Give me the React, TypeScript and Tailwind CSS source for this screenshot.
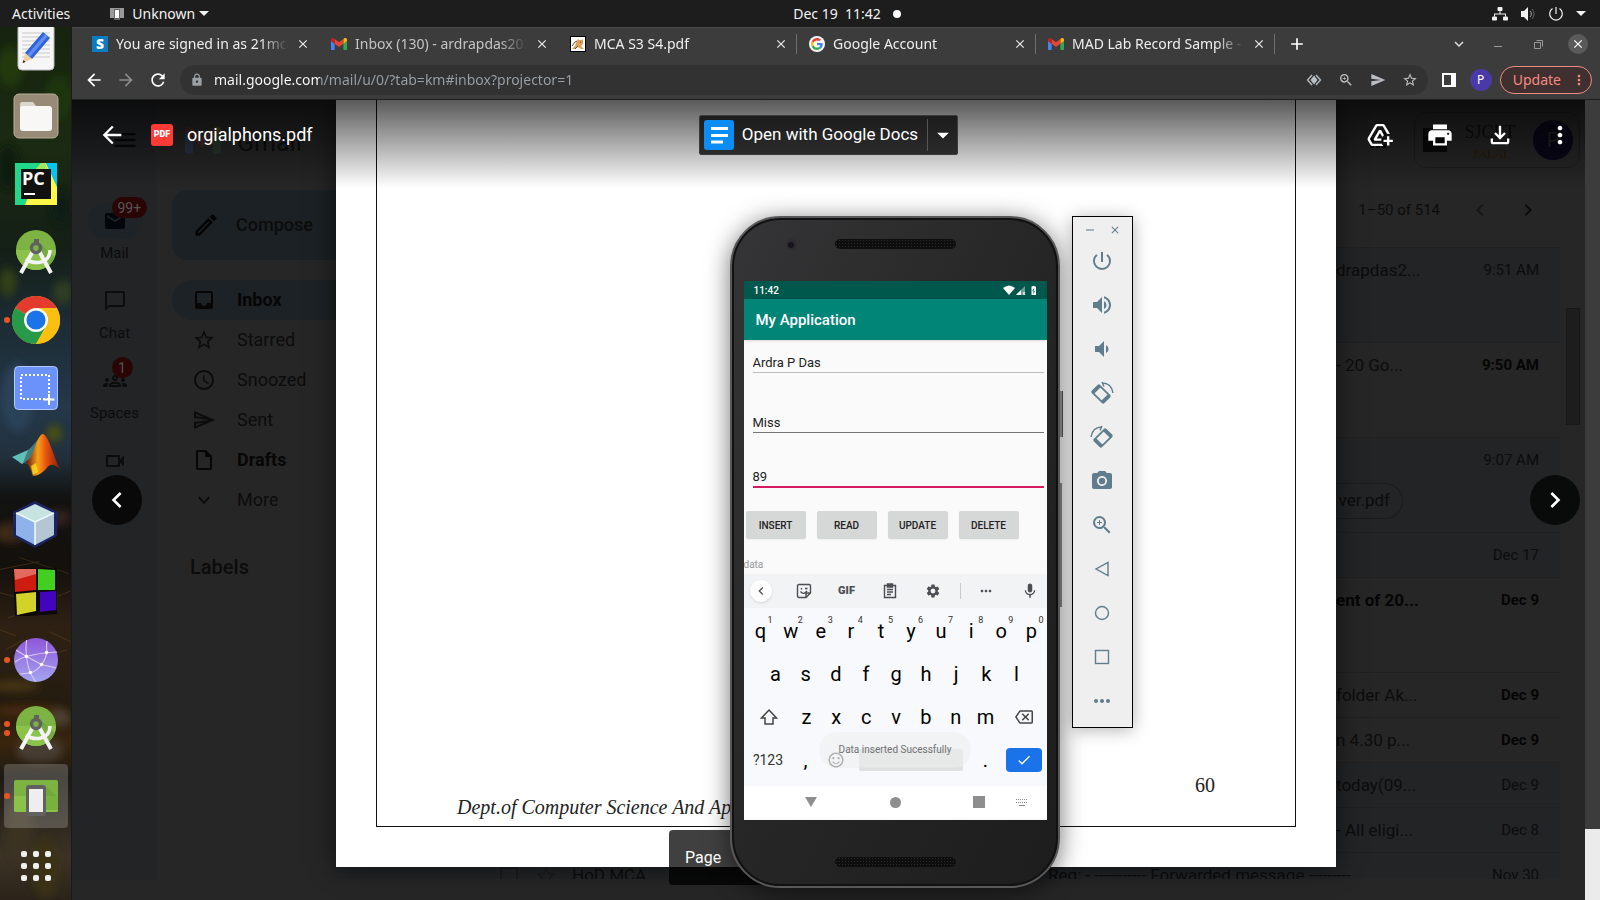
import type { ReactNode } from "react";
import {
  MdAccessTime, MdAddToDrive, MdArrowBack, MdArrowForward, MdCheck, MdChevronLeft, MdChevronRight, MdClose,
  MdInbox, MdKeyboardArrowDown, MdLock, MdMail, MdMic, MdMoreHoriz, MdMoreVert,
  MdOutlineBackspace, MdOutlineChatBubbleOutline, MdOutlineEdit, MdOutlineFileDownload,
  MdOutlineGroups, MdOutlineInsertDriveFile, MdOutlineSend, MdOutlineStarBorder, MdPhotoCamera,
  MdPowerSettingsNew, MdPrint, MdRefresh, MdSend, MdSettings, MdVolumeDown, MdVolumeUp, MdZoomIn,
  MdOutlineVideocam, MdArrowDropDown, MdMenu, MdAdd, MdOutlineSentimentSatisfied, MdApps,
} from "react-icons/md";

const ui = "font-['Noto_Sans','Open_Sans',sans-serif]";

function GmailLogo({ className }: { className: string }) {
  return (
    <svg viewBox="52 42 88 66" className={className} aria-hidden="true">
      <path fill="#4285f4" d="M58 108h14V74L52 59v43c0 3.32 2.69 6 6 6" />
      <path fill="#34a853" d="M120 108h14c3.32 0 6-2.69 6-6V59l-20 15" />
      <path fill="#fbbc04" d="M120 48v26l20-15v-8c0-7.42-8.47-11.65-14.4-7.2" />
      <path fill="#ea4335" d="M72 74V48l24 18 24-18v26L96 92" />
      <path fill="#c5221f" d="M52 51v8l20 15V48l-5.6-4.2c-5.94-4.45-14.4-.22-14.4 7.2" />
    </svg>
  );
}

function GoogleMark() {
  return (
    <svg viewBox="0 0 48 48" className="size-4" aria-hidden="true">
      <circle cx="24" cy="24" r="24" fill="#fff" />
      <g transform="translate(6 6) scale(.75)">
        <path fill="#EA4335" d="M24 9.5c3.54 0 6.71 1.22 9.21 3.6l6.85-6.85C35.9 2.38 30.47 0 24 0 14.62 0 6.51 5.38 2.56 13.22l7.98 6.19C12.43 13.72 17.74 9.5 24 9.5z" />
        <path fill="#4285F4" d="M46.98 24.55c0-1.57-.15-3.09-.38-4.55H24v9.02h12.94c-.58 2.96-2.26 5.48-4.78 7.18l7.73 6c4.51-4.18 7.09-10.36 7.09-17.65z" />
        <path fill="#FBBC05" d="M10.53 28.59A14.5 14.5 0 0 1 9.77 24c0-1.6.27-3.14.76-4.59l-7.98-6.19A24 24 0 0 0 0 24c0 3.88.92 7.54 2.56 10.78z" />
        <path fill="#34A853" d="M24 48c6.48 0 11.93-2.13 15.89-5.81l-7.73-6c-2.15 1.45-4.92 2.3-8.16 2.3-6.26 0-11.57-4.22-13.47-9.91l-7.98 6.19C6.51 42.62 14.62 48 24 48z" />
      </g>
    </svg>
  );
}

/* ---------- desktop top bar ---------- */

function TopBar() {
  return (
    <header className={`grid h-[27px] shrink-0 grid-cols-3 items-center bg-[#1d1d1d] px-3 text-sm text-[#f2f2f2] ${ui}`}>
      <div className="flex items-center gap-10">
        <button>Activities</button>
        <button className="flex items-center gap-2">
          <svg viewBox="0 0 14 12" className="h-3 w-3.5" aria-hidden="true">
            <rect width="14" height="10" fill="#9a9a9a" />
            <rect x="4" y="1" width="6" height="11" fill="#666" />
            <rect x="5" y="2" width="4" height="8" fill="#fff" />
          </svg>
          <span className="flex items-center gap-1">
            Unknown
            <svg viewBox="0 0 10 5" className="h-[5px] w-2.5" aria-hidden="true"><path d="M0 0h10L5 5z" fill="#f2f2f2" /></svg>
          </span>
        </button>
      </div>
      <div className="flex items-center justify-center gap-3 pl-[94px]">
        <button className="whitespace-pre">Dec 19  11:42</button>
        <span className="size-2 rounded-full bg-white" />
      </div>
      <button aria-label="System menu" className="flex items-center justify-end gap-3">
        <svg viewBox="0 0 16 14" className="h-3.5 w-4" fill="#f2f2f2" aria-hidden="true">
          <rect x="5.5" width="5" height="4" rx="1" /><rect y="9.500" width="5" height="4" rx="1" /><rect x="11" y="9.500" width="5" height="4" rx="1" />
          <path d="M7.500 4h1v2.500h5.500v3h-1v-2H3v2H2v-3h5.500z" />
        </svg>
        <svg viewBox="0 0 16 16" className="size-4" aria-hidden="true">
          <path d="M1 5h3l4-4v14l-4-4H1z" fill="#f2f2f2" />
          <path d="M10 5a4 4 0 0 1 0 6" stroke="#aaa" fill="none" /><path d="M12 3a7 7 0 0 1 0 10" stroke="#666" fill="none" />
        </svg>
        <svg viewBox="0 0 16 16" className="size-4" fill="none" stroke="#f2f2f2" strokeWidth="1.200" aria-hidden="true">
          <path d="M8 1v7M4.500 2.500a6.300 6.300 0 1 0 7 0" />
        </svg>
        <svg viewBox="0 0 10 5" className="mr-0.5 h-[5px] w-2.5" aria-hidden="true"><path d="M0 0h10L5 5z" fill="#f2f2f2" /></svg>
      </button>
    </header>
  );
}

/* ---------- dock ---------- */

function StudioIcon() {
  return (
    <svg viewBox="0 0 48 48" className="size-12" aria-hidden="true">
      <circle cx="24" cy="22" r="20" fill="#7cb342" />
      <path d="M4 22a20 20 0 0 0 40 0z" fill="#8bc34a" />
      <path d="M28 16l15 13a20 20 0 0 1-8 10L25 25z" fill="#5f9630" opacity=".5" />
      <path d="M21 23L9 45M27 23l12 22" stroke="#f3f3f3" strokeWidth="4" />
      <path d="M14 31c8 6 24 5 24-9" stroke="#f3f3f3" strokeWidth="3.500" fill="none" />
      <rect x="22" y="11" width="5" height="6" fill="#616161" />
      <circle cx="24" cy="20" r="4.500" fill="none" stroke="#616161" strokeWidth="3.400" />
    </svg>
  );
}

const dockItems: { name: string; dots: number; active?: boolean; icon: ReactNode }[] = [
  {
    name: "Text Editor", dots: 0, icon: (
      <svg viewBox="0 0 48 48" className="size-12" aria-hidden="true">
        <rect x="6" y="0" width="36" height="46" rx="4" fill="#f6f6f6" stroke="#bbb" />
        <path d="M10 9h28M10 13h28M10 17h28M10 21h28M10 25h28M10 29h28M10 33h28" stroke="#c9c9c9" />
        <path d="M31 8l7 6-18 21-7-6z" fill="#2f62d8" /><path d="M33 10l3 2-18 21-3-2z" fill="#5f8cf2" />
        <path d="M13 29l7 6-9 4z" fill="#f3cfa5" /><path d="M11.500 36l2 2-3 1z" fill="#222" />
      </svg>
    ),
  },
  {
    name: "Files", dots: 0, icon: (
      <svg viewBox="0 0 48 48" className="size-12" aria-hidden="true">
        <rect x="2" y="2" width="44" height="44" rx="5" fill="#978b77" stroke="#b8ad9c" />
        <path d="M8 12q0-2 2-2h11l3 4h14v8H8z" fill="#dcd7cd" />
        <rect x="8" y="14" width="32" height="25" rx="3" fill="#f8f7f5" />
      </svg>
    ),
  },
  {
    name: "PyCharm", dots: 0, icon: (
      <svg viewBox="0 0 42 42" className="size-[42px]" aria-hidden="true">
        <rect width="42" height="42" fill="#21d789" /><path d="M30 0h12v26z" fill="#07c3f2" />
        <path d="M26 0h5l11 24v18H10z" fill="#fcf84a" /><path d="M31 0h11v22z" fill="#07c3f2" /><path d="M26 0h4l3 7H20z" fill="#a5e65a" />
        <rect x="6" y="6" width="30" height="30" fill="#111" />
        <text x="7" y="22" fontSize="18" fontWeight="700" fill="#fff" fontFamily="Open Sans, sans-serif">PC</text>
        <rect x="9" y="30" width="11" height="2" fill="#fff" />
      </svg>
    ),
  },
  { name: "Android Studio", dots: 0, icon: <StudioIcon /> },
  {
    name: "Google Chrome", dots: 1, icon: (
      <svg viewBox="0 0 48 48" className="size-12" aria-hidden="true">
        <circle cx="24" cy="24" r="24" fill="#fbbf12" />
        <path d="M24 24L3.200 12A24 24 0 0 1 44.800 12z" fill="#e33b2e" />
        <path d="M3.200 12A24 24 0 0 0 24 48l10-18-10-6z" fill="#269a48" />
        <path d="M24 12h20.800A24 24 0 0 1 24 48l10.400-18z" fill="#fbbf12" />
        <circle cx="24" cy="24" r="12" fill="#fff" /><circle cx="24" cy="24" r="9.600" fill="#1a73e8" />
      </svg>
    ),
  },
  {
    name: "Screenshot", dots: 0, icon: (
      <svg viewBox="0 0 48 48" className="size-12" aria-hidden="true">
        <rect x="2.500" y="2.500" width="43" height="43" rx="4" fill="#6b92f8" stroke="#b5c9fb" />
        <rect x="9" y="11" width="28" height="24" fill="none" stroke="#fff" strokeWidth="2" strokeDasharray="2 2" />
        <path d="M37 30v11M31.500 35.500h11" stroke="#fff" strokeWidth="2" />
      </svg>
    ),
  },
  {
    name: "MATLAB", dots: 0, icon: (
      <svg viewBox="0 0 48 48" className="size-12" aria-hidden="true">
        <defs>
          <linearGradient id="peak" x1="0" x2="1"><stop offset="0" stopColor="#5e1208" /><stop offset=".35" stopColor="#f8a11a" /><stop offset=".6" stopColor="#e5520f" /><stop offset="1" stopColor="#8a1a08" /></linearGradient>
        </defs>
        <path d="M0 25l16-7c5-3 8-9 15-16l-12 24-9 6z" fill="#5fc0b8" />
        <path d="M16 18l14-15-8 22-6 7-5-1z" fill="#3a5f66" opacity=".7" />
        <path d="M14 30c8-4 11-28 17-28 6 2 11 24 17 35-6-5-10-6-14 0-4 4-8 7-13 7-2-6-3-9-7-14z" fill="url(#peak)" />
        <path d="M19 34l5-3 2 9-5 3z" fill="#ffe11a" opacity=".8" />
      </svg>
    ),
  },
  {
    name: "NetBeans", dots: 0, icon: (
      <svg viewBox="0 0 48 48" className="size-12" aria-hidden="true">
        <path d="M23 1l23 11-1 24-22 12L1 36V12z" fill="#1c2460" />
        <path d="M23 4l19 9-19 9-19-9z" fill="#c8e4e2" /><path d="M4 13l19 9v23L4 35z" fill="#8fb2ea" /><path d="M42 13l-19 9v23l19-10z" fill="#b4c6d4" />
        <path d="M23 22v23M4 13l19 9 19-9" stroke="#eefaff" strokeWidth="1.500" fill="none" />
      </svg>
    ),
  },
  {
    name: "Code Blocks", dots: 0, icon: (
      <svg viewBox="0 0 48 48" className="size-12" aria-hidden="true">
        <path d="M1 1l44-1v46L3 49z" fill="#000" opacity=".7" />
        <path d="M2 1h22v21L3 24z" fill="#cf1c10" /><path d="M2 1h22v5L3 12z" fill="#ec8a80" opacity=".7" />
        <path d="M26 1l17 1v20H26z" fill="#43cf22" /><path d="M4 26l20-2v19L5 47z" fill="#d2d228" /><path d="M28 24l16-1v19l-16 2z" fill="#4204bd" />
      </svg>
    ),
  },
  {
    name: "Web", dots: 1, icon: (
      <svg viewBox="0 0 48 48" className="size-12" aria-hidden="true">
        <defs><linearGradient id="globe" x2="0" y2="1"><stop stopColor="#8f56d8" /><stop offset="1" stopColor="#a3a5f0" /></linearGradient></defs>
        <circle cx="24" cy="24" r="22" fill="url(#globe)" />
        <g stroke="#dccaf8" fill="none" strokeWidth="1.100">
          <path d="M14.500 4q-1 8 0 16.500 1 14 9 25M35 5q-1 5 0 11.500-2 8-5.500 12-4 6-11 8.500l-11 1M3 26q5-4 11.500-5.500Q26 17 45 16M4 14l10.500 6.500 15 8L44 32" />
        </g>
        <g fill="#fff"><circle cx="14.500" cy="20.500" r="1.700" /><circle cx="34.500" cy="16.500" r="1.700" /><circle cx="29.500" cy="28.500" r="1.700" /><circle cx="18.500" cy="36.500" r="1.700" /></g>
      </svg>
    ),
  },
  { name: "Android Studio projects", dots: 2, icon: <StudioIcon /> },
  {
    name: "Emulator", dots: 1, active: true, icon: (
      <svg viewBox="0 0 48 48" className="size-12" aria-hidden="true">
        <rect x="2" y="8" width="44" height="32" rx="2" fill="#7cb342" /><path d="M2 24h44v14q0 2-2 2H4q-2 0-2-2z" fill="#8bc34a" />
        <path d="M32 13l14 12v13H34z" fill="#5f9630" opacity=".4" />
        <rect x="14" y="13" width="20" height="31" rx="3" fill="#616161" /><rect x="17" y="17" width="14" height="23" fill="#eee" />
      </svg>
    ),
  },
];

function Dock() {
  return (
    <nav
      aria-label="Dock"
      className="relative w-[72px] shrink-0 overflow-hidden border-r border-[#1a1a1a] bg-[linear-gradient(180deg,#16240f_0px,#1b2a12_120px,#141f16_220px,#1c2b33_290px,#24384a_380px,#22303c_430px,#121312_470px,#14100c_540px,#2e2114_600px,#241c10_680px,#3a250d_715px,#1d1a15_750px,#3c3325_830px,#201912_900px)]"
    >
      <svg viewBox="0 0 72 872" preserveAspectRatio="none" className="absolute inset-0 size-full" aria-hidden="true">
        <defs><filter id="soft"><feGaussianBlur stdDeviation="4" /></filter></defs>
        <g filter="url(#soft)">
          <ellipse cx="10" cy="40" rx="14" ry="20" fill="#22380f" /><ellipse cx="60" cy="70" rx="14" ry="22" fill="#1f3611" />
          <ellipse cx="8" cy="140" rx="12" ry="22" fill="#0d1a10" /><ellipse cx="62" cy="180" rx="10" ry="18" fill="#0e1c12" />
          <ellipse cx="8" cy="255" rx="9" ry="14" fill="#333f16" /><ellipse cx="64" cy="265" rx="10" ry="12" fill="#2e3d24" />
          <ellipse cx="18" cy="370" rx="16" ry="34" fill="#2c4258" /><ellipse cx="55" cy="406" rx="8" ry="8" fill="#4c5010" />
          <ellipse cx="10" cy="505" rx="16" ry="10" fill="#3d2a17" /><ellipse cx="60" cy="490" rx="12" ry="8" fill="#33241a" />
          <ellipse cx="14" cy="658" rx="26" ry="5" fill="#4a3717" /><ellipse cx="30" cy="683" rx="38" ry="5" fill="#4d2a0d" />
          <ellipse cx="60" cy="690" rx="12" ry="8" fill="#4d4330" /><ellipse cx="40" cy="722" rx="24" ry="12" fill="#463e32" />
          <ellipse cx="20" cy="800" rx="14" ry="36" fill="#3b3324" /><ellipse cx="46" cy="840" rx="14" ry="30" fill="#3b3213" />
        </g>
        <g stroke="#6a4a22" strokeWidth="1" opacity=".45" fill="none">
          <path d="M0 542l40-8M20 530l50 16M0 565l30 8M44 575l28-12M8 590l20-6M0 602l16 6M50 604l22 10M6 622l18-10M48 628l20-6M30 612l12 10" />
        </g>
      </svg>
      <ul className="relative -mt-[11px] flex flex-col gap-1">
        {dockItems.map((d) => (
          <li key={d.name} className="flex h-16 items-center justify-center">
            <button
              aria-label={d.name}
              className={d.active
                ? "relative flex size-16 items-center justify-center rounded bg-white/20"
                : "relative flex size-16 items-center justify-center"}
            >
              {d.dots > 0 && (
                <span className="absolute left-0 flex flex-col gap-[3px]">
                  {Array.from({ length: d.dots }, (_, i) => <span key={i} className="size-1.5 rounded-full bg-[#e95420]" />)}
                </span>
              )}
              {d.icon}
            </button>
          </li>
        ))}
        <li className="flex justify-center pt-[19px]">
          <button aria-label="Show applications" className="grid grid-cols-3 gap-1.5">
            {Array.from({ length: 9 }, (_, i) => <span key={i} className="size-1.5 rounded-[2px] bg-[#f0f0f0]" />)}
          </button>
        </li>
      </ul>
    </nav>
  );
}

/* ---------- browser ---------- */

const tabs: { title: string; dim?: boolean; sep?: boolean; icon: ReactNode }[] = [
  { title: "You are signed in as 21mca", icon: <span className="flex size-4 items-center justify-center bg-[#0a7cc4] text-sm font-black text-white">S</span> },
  { title: "Inbox (130) - ardrapdas2022", dim: true, icon: <GmailLogo className="h-3 w-4" /> },
  {
    title: "MCA S3 S4.pdf", sep: true, icon: (
      <svg viewBox="0 0 16 16" className="size-4" aria-hidden="true">
        <rect width="16" height="16" fill="#000" /><rect x="1" y="1" width="14" height="14" fill="#fff" />
        <path d="M8 3l1 1h3l1-1v5l-2 2 3 3h-3l-3-2-3 2H2l3-3 1-3z" fill="#d9a257" /><path d="M2 10l3-4 2-1M5 13l3-3M10 6h1" stroke="#6d4a20" fill="none" />
      </svg>
    ),
  },
  { title: "Google Account", sep: true, icon: <GoogleMark /> },
  { title: "MAD Lab Record Sample - a", sep: true, icon: <GmailLogo className="h-3 w-4" /> },
];

function TabStrip() {
  return (
    <div className="flex h-[39px] items-center border-t border-[#4a4a4a] pr-3 pb-1.5 pl-2">
      {tabs.map((t) => (
        <div key={t.title} className={t.sep ? "flex h-5 w-[239px] items-center gap-2 border-r border-[#6e6e6e] pr-2 pl-3" : "flex h-5 w-[239px] items-center gap-2 pr-[9px] pl-3"}>
          {t.icon}
          <button className={t.dim
            ? "flex-1 overflow-hidden text-left whitespace-nowrap text-[#c4c4c4] [mask-image:linear-gradient(90deg,#000_84%,transparent)]"
            : "flex-1 overflow-hidden text-left whitespace-nowrap text-[#eee] [mask-image:linear-gradient(90deg,#000_84%,transparent)]"}>
            {t.title}
          </button>
          <button aria-label={`Close ${t.title}`}><MdClose className="size-3.5 text-[#eee]" /></button>
        </div>
      ))}
      <button aria-label="New tab" className="ml-3"><MdAdd className="size-5 text-white" /></button>
      <div className="ml-auto flex items-center gap-5 text-[#ddd]">
        <button aria-label="Search tabs"><MdKeyboardArrowDown className="size-[18px]" /></button>
        <button aria-label="Minimize" className="flex size-5 items-center justify-center"><span className="mt-1 h-px w-2 bg-[#999]" /></button>
        <button aria-label="Restore" className="flex size-5 items-center justify-center">
          <svg viewBox="0 0 9 9" className="size-[9px]" fill="none" stroke="#999" aria-hidden="true"><path d="M.5 2.500h6v6h-6zM2.500.5h6v6" /></svg>
        </button>
        <button aria-label="Close window" className="flex size-5 items-center justify-center rounded-full bg-[#5a5a5a]"><MdClose className="size-3.5 text-white" /></button>
      </div>
    </div>
  );
}

function Toolbar() {
  return (
    <div className="flex h-[34px] items-center border-b border-[#1f1f1f] pr-2 pb-1.5 pl-3">
      <div className="flex items-center gap-3">
        <button aria-label="Back"><MdArrowBack className="size-5 text-white" /></button>
        <button aria-label="Forward"><MdArrowForward className="size-5 text-[#8a8a8a]" /></button>
        <button aria-label="Reload"><MdRefresh className="size-5 text-white" /></button>
      </div>
      <div className="ml-3 flex h-[30px] flex-1 items-center rounded-full bg-[#323232] pr-2.5 pl-2.5">
        <MdLock className="size-3.5 text-[#9aa0a6]" />
        <input
          aria-label="Address"
          defaultValue="mail.google.com/mail/u/0/?tab=km#inbox?projector=1"
          className="ml-2.5 flex-1 bg-[linear-gradient(90deg,#fff_106px,#9aa0a6_106px)] bg-clip-text text-sm text-transparent outline-none"
        />
        <div className="flex items-center gap-4 text-[#bcc0c4]">
          <button aria-label="Site view">
            <svg viewBox="0 0 16 16" className="size-4" aria-hidden="true">
              <path d="M6 3L1.500 8 6 13M10 3l4.500 5-4.500 5" fill="none" stroke="currentColor" strokeWidth="1.300" /><path d="M8 3.500l3.500 4.500L8 12.500 4.500 8z" fill="currentColor" />
            </svg>
          </button>
          <button aria-label="Zoom"><MdZoomIn className="size-4" /></button>
          <button aria-label="Share"><MdSend className="size-4" /></button>
          <button aria-label="Bookmark"><MdOutlineStarBorder className="size-4" /></button>
        </div>
      </div>
      <button aria-label="Side panel" className="ml-3.5">
        <svg viewBox="0 0 14 14" className="size-3.5" aria-hidden="true"><path fillRule="evenodd" d="M0 0h14v14H0zM2 2v10h7V2z" fill="#fff" /></svg>
      </button>
      <button aria-label="Profile" className="ml-3.5 flex size-[22px] items-center justify-center rounded-full bg-[#4a3aa8] text-xs text-white">P</button>
      <button className="ml-2 flex h-7 items-center gap-2.5 rounded-full border border-[#f28b82] bg-[#3f2f2f] pr-1 pl-3 text-sm text-[#f28b82]">
        Update <MdMoreVert className="size-4" />
      </button>
    </div>
  );
}

/* ---------- mailbox behind the viewer ---------- */

const railItems = [
  { label: "Mail", badge: "99+", Icon: MdMail, on: true },
  { label: "Chat", badge: "", Icon: MdOutlineChatBubbleOutline, on: false },
  { label: "Spaces", badge: "1", Icon: MdOutlineGroups, on: false },
  { label: "Meet", badge: "", Icon: MdOutlineVideocam, on: false },
];

const folders = [
  { label: "Inbox", Icon: MdInbox, bold: true, on: true },
  { label: "Starred", Icon: MdOutlineStarBorder, bold: false, on: false },
  { label: "Snoozed", Icon: MdAccessTime, bold: false, on: false },
  { label: "Sent", Icon: MdOutlineSend, bold: false, on: false },
  { label: "Drafts", Icon: MdOutlineInsertDriveFile, bold: true, on: false },
  { label: "More", Icon: MdKeyboardArrowDown, bold: false, on: false },
];

const mails: { text: string; time: string; unread?: boolean; boldText?: boolean; tall?: boolean; chip?: string }[] = [
  { text: "drapdas2...", time: "9:51 AM", tall: true },
  { text: "- 20 Go...", time: "9:50 AM", unread: true, tall: true },
  { text: "", time: "9:07 AM", tall: true, chip: "ver.pdf" },
  { text: "", time: "Dec 17" },
  { text: "ent of 20...", time: "Dec 9", unread: true, boldText: true, tall: true },
  { text: "folder Ak...", time: "Dec 9", unread: true },
  { text: "n 4.30 p...", time: "Dec 9", unread: true },
  { text: "today(09...", time: "Dec 9" },
  { text: "- All eligi...", time: "Dec 8" },
];

function Mailbox() {
  return (
    <div className="flex h-full flex-col overflow-hidden bg-[#262626] font-[Roboto,sans-serif] text-[#0c0c0c]">
      <div className="flex h-20 shrink-0 items-center pr-5">
        <div className="flex h-full w-[105px] items-center justify-center bg-linear-to-r from-[#222426] from-80% to-[#262626] to-80%"><MdMenu className="size-7 text-[#070707]" /></div>
        <GmailLogo className="ml-2 h-7 w-9 opacity-15" />
        <span className="ml-4 pt-1.5 text-[25px] text-[#0e0e0e]">Gmail</span>
        <MdApps className="ml-auto size-6" />
        <div className="ml-6 flex h-14 w-[166px] items-center justify-between rounded-xl border border-[#1d1d1d] pr-1.5 pl-2">
          <span className="size-6 bg-[#080808]" />
          <span className="flex flex-col text-center font-['Liberation_Serif',serif] leading-4"><span className="text-lg">SJCET</span><span className="text-xs text-[#2c1b08]">PALAI</span></span>
          <span className="flex size-10 items-center justify-center rounded-full bg-[#090618] text-xl text-[#222]">P</span>
        </div>
      </div>
      <div className="flex min-h-0 flex-1">
        <div className="flex w-[85px] flex-col items-center gap-5 bg-[#222426] pt-[23px]">
          {railItems.map(({ label, badge, Icon, on }) => (
            <a key={label} href="#rail" className="flex flex-col items-center gap-1 text-[15px] leading-5">
              <span className={on ? "relative flex h-9 w-[54px] items-center justify-center rounded-full bg-[#1d2327] text-[#03070d]" : "relative flex h-9 w-[54px] items-center justify-center"}>
                <Icon className="size-6" />
                {badge && <span className="absolute -top-1.5 left-6 flex h-[21px] min-w-[21px] items-center justify-center rounded-full bg-[#2a0505] px-1.5 text-sm text-[#555]">{badge}</span>}
              </span>
              {label}
            </a>
          ))}
        </div>
        <div className="w-[179px] pt-2.5 pl-[15px]">
          <button className="flex h-[70px] w-full items-center gap-4 rounded-l-2xl bg-[#1b2124] pl-5 text-lg font-medium"><MdOutlineEdit className="size-7 text-black" />Compose</button>
          <nav aria-label="Folders" className="mt-5">
            {folders.map(({ label, Icon, bold, on }) => (
              <a key={label} href="#folder" className={`flex h-10 items-center gap-[21px] rounded-l-full pl-5 text-lg ${on ? "bg-[#1c2226]" : ""} ${bold ? "font-bold text-[#060606]" : ""}`}>
                <Icon className="size-6" />{label}
              </a>
            ))}
          </nav>
          <h2 className="mt-8 pl-[18px] text-xl leading-[30px] font-medium">Labels</h2>
        </div>
        <div className="min-w-0 flex-1 pr-10">
          <div className="flex h-[60px] items-center justify-end gap-6 pr-5">
            <span className="pr-1 text-[15px]">1–50 of 514</span>
            <button aria-label="Newer"><MdChevronLeft className="size-6 text-[#171717]" /></button>
            <button aria-label="Older"><MdChevronRight className="size-6" /></button>
          </div>
          <ul className="mt-[7px]">
            {mails.map((m, i) => (
              <li key={i} className={`border-t border-[#202020] ${m.unread ? "" : "bg-[#222426]"} ${m.tall ? "h-[95px]" : "h-[45px]"}`}>
                <div className="ml-auto flex h-[45px] w-[224px] items-center justify-between pr-[21px]">
                  <span className={m.boldText ? "text-[17px] font-bold text-[#050505]" : "text-[17px]"}>{m.text}</span>
                  <span className={m.unread ? "text-[15px] font-bold text-[#050505]" : "text-[15px]"}>{m.time}</span>
                </div>
                {m.chip && <div className="ml-auto w-[224px]"><span className="flex h-9 w-[67px] items-center justify-end rounded-r-full border border-l-0 border-[#1b1b1b] pr-3 text-[17px]">{m.chip}</span></div>}
              </li>
            ))}
            <li className="flex h-[27px] items-start overflow-hidden border-t border-[#202020] bg-[#222426] pr-[21px] pl-[164px]">
              <span className="flex h-[45px] flex-1 items-center text-[17px]">
                <span className="size-[18px] border-2 border-[#1c1c1c]" />
                <MdOutlineStarBorder className="ml-4 size-6 text-[#1c1c1c]" />
                <span className="ml-3.5">HoD MCA</span>
              </span>
              <span className="flex h-[45px] w-[491px] items-center justify-between text-[17px]">
                <span>Req: - ----------- Forwarded message ---------</span><span className="text-[15px]">Nov 30</span>
              </span>
            </li>
          </ul>
        </div>
      </div>
      <div className="h-5 shrink-0" />
    </div>
  );
}

/* ---------- pdf viewer ---------- */

function Viewer() {
  return (
    <div className="absolute inset-0 overflow-hidden font-[Roboto,sans-serif]">
      <div className="flex justify-center">
        <article className="h-[767px] w-[1000px] bg-white px-10 pb-10 font-['Liberation_Serif',serif] text-[#222] shadow-[0_0_24px_rgba(0,0,0,0.6)]">
          <div className="flex h-full flex-col justify-end border border-t-0 border-[#111] pr-20 pl-20">
            <p className="text-right text-xl leading-5">60</p>
            <p className="mb-[7px] text-xl leading-6 italic">Dept.of Computer Science And Applications</p>
          </div>
        </article>
      </div>

      <div className="absolute inset-x-0 top-0 h-[88px] bg-linear-to-b from-black/65 to-transparent">
        <div className="grid h-[70px] grid-cols-3 items-center pr-[15px] text-white">
          <div className="flex items-center pl-[26px]">
            <button aria-label="Close viewer"><MdArrowBack className="size-7" /></button>
            <span className="ml-[25px] flex size-[22px] items-center justify-center rounded-[3px] bg-[#ff3b36] text-[9px] font-black">PDF</span>
            <h1 className="ml-3.5 text-lg">orgialphons.pdf</h1>
          </div>
          <div className="flex h-10 items-center justify-self-center rounded-xs border border-[#3a3a3a] bg-linear-to-b from-[#1c1c1c] to-[#2b2b2b]">
            <button className="flex items-center gap-2 pr-[9px] pl-1 text-[17px] whitespace-nowrap">
              <svg viewBox="0 0 30 30" className="size-[30px]" aria-hidden="true"><rect width="30" height="30" rx="3" fill="#0b8df5" /><path d="M7 8.500h17M7 15.500h17M7 22h12" stroke="#fff" strokeWidth="3.200" /></svg>
              Open with Google Docs
            </button>
            <button aria-label="More apps" className="flex h-8 w-[30px] items-center justify-center border-l border-[#555]"><MdArrowDropDown className="size-7" /></button>
          </div>
          <div className="flex items-center gap-8 justify-self-end pr-[11px]">
            <button aria-label="Add to Drive"><MdAddToDrive className="size-7" /></button>
            <button aria-label="Print"><MdPrint className="size-7" /></button>
            <button aria-label="Download"><MdOutlineFileDownload className="size-7" /></button>
            <button aria-label="More actions"><MdMoreVert className="size-7" /></button>
          </div>
        </div>
      </div>

      <button aria-label="Previous" className="absolute top-[375px] left-5 flex size-[50px] items-center justify-center rounded-full bg-[#090909] text-white"><MdChevronLeft className="size-8" /></button>
      <button aria-label="Next" className="absolute top-[375px] right-5 flex size-[50px] items-center justify-center rounded-full bg-[#090a0a] text-white"><MdChevronRight className="size-8" /></button>
      <div className="absolute bottom-[15px] left-1/2 flex h-[55px] w-[320px] -translate-x-[167px] items-center rounded bg-black/75 pl-4 text-base text-white">Page</div>
      <div className="absolute inset-y-0 right-0 flex w-[15px] flex-col justify-end bg-[#3c3c3c]"><div className="h-[71px] bg-[#ebebeb]" /></div>
      <div className="absolute top-[208px] right-5 h-[117px] w-3.5 border border-[#181818] bg-[#1d1d1d]" />
    </div>
  );
}

/* ---------- emulator ---------- */

function Speaker() {
  return <div className="h-2.5 w-[121px] rounded-full bg-[#0e0e0e] bg-[radial-gradient(#2a2a2a_1px,transparent_1px)] bg-size-[3px_3px]" />;
}

const digits = "1234567890";

function Key({ char, digit }: { char: string; digit?: string }) {
  return (
    <button className="relative flex h-[43px] flex-1 items-center justify-center text-xl text-black">
      {char}
      {digit && <span className="absolute top-[5px] right-[3px] text-[9px] leading-3 text-[#333]">{digit}</span>}
    </button>
  );
}

function Keyboard() {
  return (
    <div className="relative">
      <div className="flex h-[34px] items-center bg-[#f1f3f4] pl-1.5 text-[#4a4e53]">
        <div className="flex gap-[21px]">
          <button aria-label="Collapse" className="flex size-[22px] items-center justify-center rounded-full bg-white shadow-sm"><MdChevronLeft className="size-4" /></button>
          <button aria-label="Stickers" className="flex w-[22px] items-center justify-center">
            <svg viewBox="0 0 16 16" className="size-4" fill="none" stroke="currentColor" strokeWidth="1.400" aria-hidden="true">
              <path d="M3 1.500h10q1.500 0 1.500 1.500v7l-4.500 4.500H3q-1.500 0-1.500-1.500V3q0-1.500 1.500-1.500zM14.500 10H12q-2 0-2 2v2.500M4.500 8.500q3 4 6.500-.5M5.500 5v1.500M9 5.500h2.500" />
            </svg>
          </button>
          <button className="flex w-[22px] items-center justify-center text-[11px] font-black">GIF</button>
          <button aria-label="Clipboard" className="flex w-[22px] items-center justify-center">
            <svg viewBox="0 0 16 16" className="size-4" fill="none" stroke="currentColor" strokeWidth="1.400" aria-hidden="true">
              <path d="M2.500 2.500h11v12h-11zM5 6.500h6M5 9h6M5 11.500h4" /><path d="M5.500 1h5v3h-5z" fill="currentColor" />
            </svg>
          </button>
          <button aria-label="Settings" className="flex w-[22px] items-center justify-center"><MdSettings className="size-4" /></button>
        </div>
        <span className="ml-4 h-4 w-px bg-[#c8cbce]" />
        <button aria-label="More" className="ml-3.5 flex w-[22px] justify-center"><MdMoreHoriz className="size-4" /></button>
        <button aria-label="Voice input" className="ml-[22px] flex w-[22px] justify-center"><MdMic className="size-[18px]" /></button>
      </div>
      <div className="h-[178px] bg-[#f8f9fc] pt-px pl-0.5">
        <div className="flex">{"qwertyuiop".split("").map((c, i) => <Key key={c} char={c} digit={digits[i]} />)}</div>
        <div className="flex px-[15px]">{"asdfghjkl".split("").map((c) => <Key key={c} char={c} />)}</div>
        <div className="flex">
          <button aria-label="Shift" className="flex w-[46px] items-center justify-center">
            <svg viewBox="0 0 18 18" className="size-[18px]" fill="none" stroke="#444" strokeWidth="1.500" aria-hidden="true"><path d="M9 2l7.500 8H13v6H5v-6H1.500z" /></svg>
          </button>
          {"zxcvbnm".split("").map((c) => <Key key={c} char={c} />)}
          <button aria-label="Backspace" className="flex w-[46px] items-center justify-center"><MdOutlineBackspace className="size-[18px] text-[#444]" /></button>
        </div>
        <div className="flex h-[43px] items-center">
          <button className="w-[45px] text-sm text-[#333]">?123</button>
          <button className="w-[30px] text-xl text-black">,</button>
          <button aria-label="Emoji" className="flex w-[30px] justify-center"><MdOutlineSentimentSatisfied className="size-[18px] text-[#8b8b8b]" /></button>
          <div className="flex-1 px-2"><button aria-label="Space" className="block h-[22px] w-full rounded-xs border-b-4 border-[#dfe0e1] bg-[#e6e6e7]" /></div>
          <button className="w-[30px] text-xl text-black">.</button>
          <div className="flex w-[46px] justify-center"><button aria-label="Done" className="flex h-6 w-9 items-center justify-center rounded bg-[#1a73e8] text-white"><MdCheck className="size-4" /></button></div>
        </div>
      </div>
      <div role="status" className="absolute bottom-[18px] left-1/2 flex h-9 w-[152px] -translate-x-1/2 justify-center rounded-full bg-[#e8eaea]/40 pt-2.5 text-[10px] leading-4 text-[#6f7172]">Data inserted Sucessfully</div>
    </div>
  );
}

function Phone() {
  return (
    <div className="absolute top-[216px] left-[730px]">
      <div className="relative flex h-[672px] w-[330px] flex-col items-center rounded-[50px] border-2 border-[#58585a] bg-linear-to-br from-[#353537] via-[#262626] to-[#1d1d1d] shadow-[0_4px_24px_rgba(0,0,0,0.55)] ring-2 ring-[#111] ring-inset">
        <div className="flex h-[63px] w-full items-start justify-center pt-[21px]">
          <span className="mr-[38px] -ml-[49px] flex size-[11px] items-center justify-center rounded-full bg-[#2f2b30]"><span className="size-1.5 rounded-full bg-[#15131c]" /></span>
          <Speaker />
        </div>
        <div className="flex h-[539px] w-[303px] flex-col overflow-hidden bg-[#fafafa] font-[Roboto,sans-serif]">
          <div className="flex h-[18px] items-center justify-between bg-[#00574b] pr-2.5 pl-2.5 text-[10px] font-medium text-white">
            11:42
            <svg viewBox="0 0 34 11" className="h-[11px] w-[34px]" aria-hidden="true">
              <path d="M0 3q6-5 12 0L6 10z" fill="#fff" /><path d="M22 1v9h-9z" fill="#6d9c94" /><path d="M18 5v5h-5z" fill="#fff" /><path d="M20 7l2 3M22 7l-2 3" stroke="#fff" strokeWidth=".8" />
              <path d="M28.500 1.500h1V1h2v.5h1.500V10h-4.500z" fill="#fff" /><path d="M31 3.500L29.800 6h1.500l-.8 2.500" stroke="#00574b" fill="none" strokeWidth=".8" />
            </svg>
          </div>
          <div className="flex h-[41px] items-center bg-[#008577] pt-px pl-3 text-[15px] font-medium text-white shadow">My Application</div>
          <form className="flex flex-col" onSubmit={(e) => e.preventDefault()}>
            <div className="flex flex-col pr-[3px] pl-[9px] text-[13px] text-[#222]">
              <input aria-label="Name" defaultValue="Ardra P Das" className="mt-3 h-[21px] border-b border-[#bdbdbd] outline-none" />
              <input aria-label="Title" defaultValue="Miss" className="mt-[39px] h-[21px] border-b border-[#757575] outline-none" />
              <input aria-label="Mark" defaultValue="89" className="mt-[33px] h-[22px] border-b-2 border-[#d81b60] outline-none" />
            </div>
            <div className="mt-[23px] flex gap-[11px] pl-0.5">
              {["INSERT", "READ", "UPDATE", "DELETE"].map((b) => (
                <button key={b} className="h-7 w-[60px] rounded-xs bg-[#d6d7d7] text-[10px] font-medium text-[#222] shadow-xs">{b}</button>
              ))}
            </div>
          </form>
          <p className="mt-[19px] mb-0.5 text-[10px] leading-[14px] text-[#999]">data</p>
          <Keyboard />
          <div className="flex h-8 items-center bg-white pr-[19px] pl-[61px]">
            <svg viewBox="0 0 12 10" className="h-2.5 w-3" aria-hidden="true"><path d="M0 0h12L6 10z" fill="#8e8e8e" /></svg>
            <span className="ml-[73px] size-[11px] rounded-full bg-[#8e8e8e]" />
            <span className="ml-[72px] size-3 bg-[#8e8e8e]" />
            <svg viewBox="0 0 12 8" className="ml-auto h-2 w-3" aria-hidden="true"><path d="M0 1.500h12M0 4.500h12" stroke="#8e8e8e" strokeDasharray="1 1" /><path d="M3 7.500h6" stroke="#8e8e8e" /></svg>
          </div>
        </div>
        <div className="mt-[37px]"><Speaker /></div>
      </div>
      <div className="absolute top-[175px] -right-[3px] h-[46px] w-[3px] border-r border-[#444] bg-[#77777a]" />
      <div className="absolute top-[267px] -right-[2px] h-[124px] w-0.5 bg-[#6a6a6d]" />
    </div>
  );
}

function Rotate({ flip }: { flip?: boolean }) {
  return (
    <svg viewBox="0 0 24 24" className={flip ? "size-6 -scale-x-100" : "size-6"} fill="none" stroke="currentColor" strokeWidth="2" aria-hidden="true">
      <g transform="rotate(-45 11 13)"><rect x="6" y="5" width="10" height="16" rx="1" strokeWidth="1.800" /><path d="M6 6.500h10M6 19.500h10" strokeWidth="3" /></g>
      <path d="M12 2q9.500 0 11 10" strokeWidth="1.400" /><path d="M12 1l2 4.500" strokeWidth="1.400" />
    </svg>
  );
}

const tools: { name: string; icon: ReactNode }[] = [
  { name: "Power", icon: <MdPowerSettingsNew className="size-6" /> },
  { name: "Volume up", icon: <MdVolumeUp className="size-6" /> },
  { name: "Volume down", icon: <MdVolumeDown className="size-6" /> },
  { name: "Rotate left", icon: <Rotate /> },
  { name: "Rotate right", icon: <Rotate flip /> },
  { name: "Take screenshot", icon: <MdPhotoCamera className="size-6" /> },
  { name: "Zoom mode", icon: <MdZoomIn className="size-6" /> },
  { name: "Back", icon: <svg viewBox="0 0 16 16" className="size-4" fill="none" stroke="currentColor" strokeWidth="1.400"><path d="M14 1.500v13L2 8z" /></svg> },
  { name: "Home", icon: <svg viewBox="0 0 16 16" className="size-4" fill="none" stroke="currentColor" strokeWidth="1.400"><circle cx="8" cy="8" r="6.500" /></svg> },
  { name: "Overview", icon: <svg viewBox="0 0 16 16" className="size-4" fill="none" stroke="currentColor" strokeWidth="1.400"><rect x="1.500" y="1.500" width="13" height="13" /></svg> },
  { name: "More", icon: <MdMoreHoriz className="size-6" /> },
];

function EmulatorTools() {
  return (
    <aside aria-label="Emulator controls" className="absolute top-[216px] left-[1072px] flex w-[61px] flex-col border border-black bg-[#efefef] pr-px pb-1 text-[#5f7d8c] shadow-[0_2px_16px_rgba(0,0,0,0.3)]">
      <div className="flex h-[22px] items-center justify-center gap-[13px] pt-1">
        <button aria-label="Minimize emulator" className="flex size-3 items-center justify-center"><span className="h-0.5 w-2 bg-[#a3b4bd]" /></button>
        <button aria-label="Close emulator"><MdClose className="size-3" /></button>
      </div>
      {tools.map((t) => (
        <button key={t.name} aria-label={t.name} className="flex h-11 items-center justify-center">{t.icon}</button>
      ))}
    </aside>
  );
}

export default function App() {
  return (
    <div className="relative flex h-screen flex-col overflow-hidden bg-[#1d1d1d]">
      <TopBar />
      <div className="flex min-h-0 flex-1">
        <Dock />
        <main className="flex min-w-0 flex-1 flex-col">
          <div className={`bg-[#3c3c3c] text-sm ${ui}`}>
            <TabStrip />
            <Toolbar />
          </div>
          <div className="relative min-h-0 flex-1">
            <Mailbox />
            <Viewer />
          </div>
        </main>
      </div>
      <Phone />
      <EmulatorTools />
    </div>
  );
}
